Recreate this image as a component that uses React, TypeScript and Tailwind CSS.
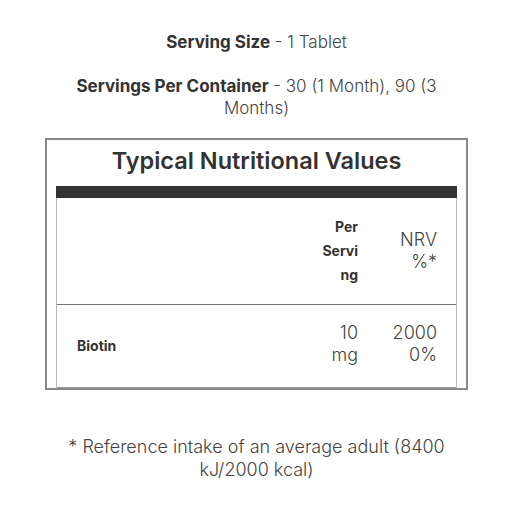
import React from "react";

export default function App() {
  const font = { fontFamily: "Inter, 'Noto Sans', sans-serif" };
  return (
    <div className="w-[523px] h-[523px] bg-white text-[#333]" style={font}>
      <div className="ml-[45px] w-[423px] pt-[31px]">
        <p className="text-center text-[17px] leading-[22px]">
          <span className="font-bold">Serving Size</span>
          <span className="font-light text-[#444]"> - 1 Tablet</span>
        </p>
        <p className="mt-[22px] text-center text-[17px] leading-[22px] px-[20px]">
          <span className="font-bold">Servings Per Container</span>
          <span className="font-light text-[#444]"> - 30 (1 Month), 90 (3 Months)</span>
        </p>
        <div className="mt-[19px] border-2 border-[#8a8a8a] px-[9px] pt-[6px]">
          <h2 className="text-center text-[23.5px] leading-[30px] font-semibold text-[#333]">
            Typical Nutritional Values
          </h2>
          <div className="mt-[10px] h-[12px] bg-[#333]" />
          <div className="border-x border-[#bbb]">
            <div className="flex h-[107px] items-center border-b border-[#777]">
              <div className="flex-1" />
              <div className="w-[80px] pr-[18px] text-right text-[14px] leading-[24px] font-bold">
                Per
                <br />
                Servi
                <br />
                ng
              </div>
              <div className="w-[80px] pr-[19px] text-right text-[18px] leading-[22px] font-light text-[#444]">
                NRV
                <br />
                %*
              </div>
            </div>
            <div className="flex h-[83px] items-center border-b border-[#999]">
              <div className="flex-1 pl-[20px] text-[14px] font-bold leading-[24px]">Biotin</div>
              <div className="w-[80px] pr-[18px] text-right text-[18px] leading-[22px] font-light text-[#444] -mt-[5px]">
                10
                <br />
                mg
              </div>
              <div className="w-[80px] pr-[19px] text-right text-[18px] leading-[22px] font-light text-[#444] -mt-[5px]">
                2000
                <br />
                0%
              </div>
            </div>
          </div>
        </div>
        <p className="mt-[45px] px-[12px] text-center text-[18px] leading-[23px] font-light text-[#444]">
          * Reference intake of an average adult (8400 kJ/2000 kcal)
        </p>
      </div>
    </div>
  );
}
